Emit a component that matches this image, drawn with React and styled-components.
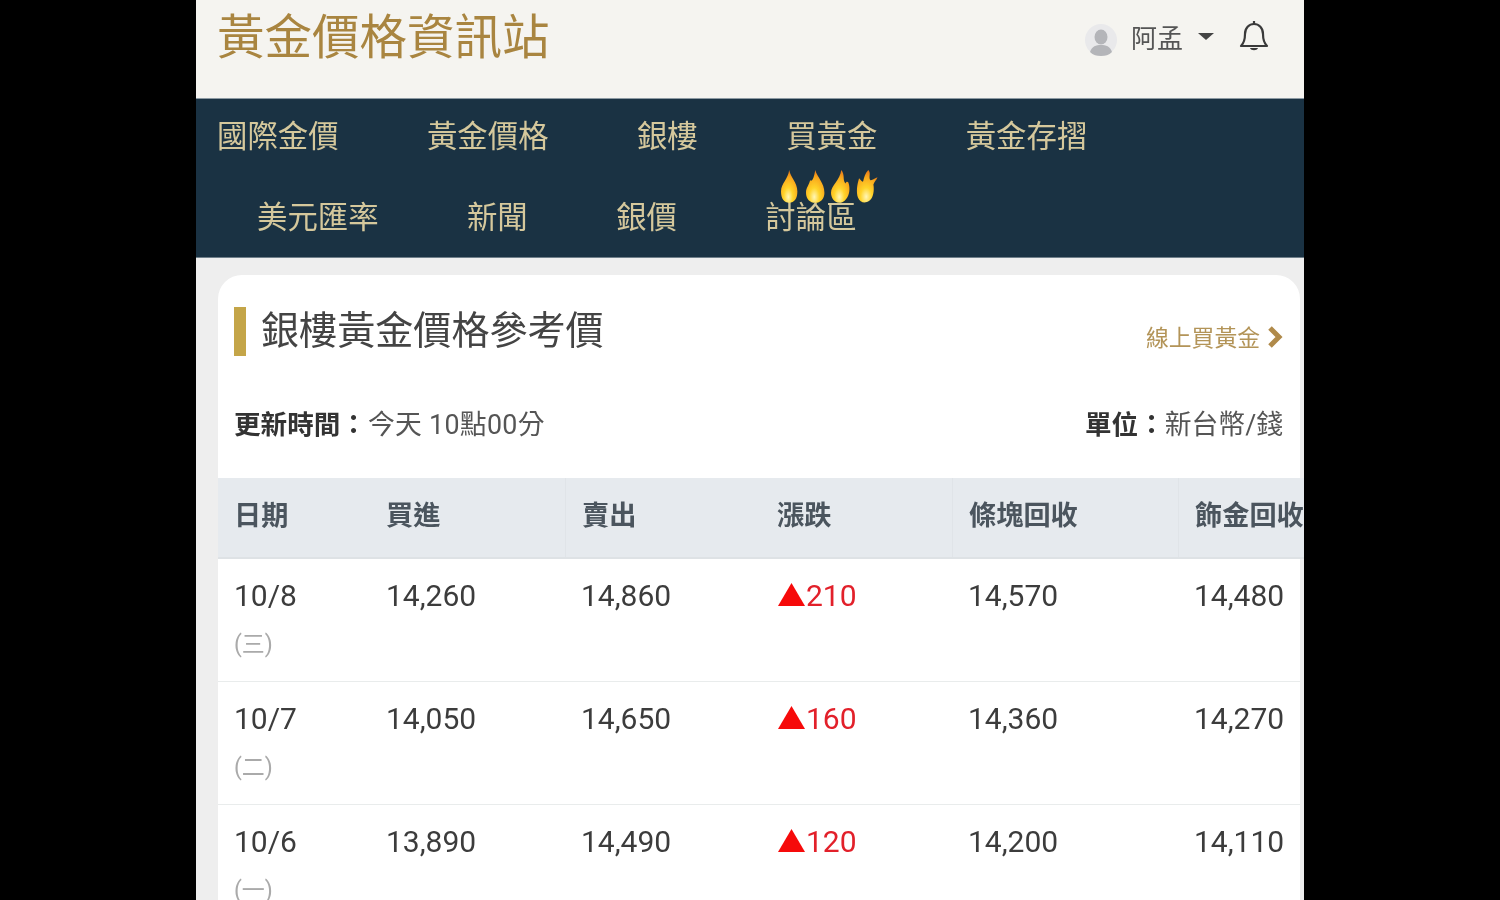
import React from "react";
import styled, { createGlobalStyle } from "styled-components";

const Global = createGlobalStyle`
  html, body { margin: 0; padding: 0; height: 100%; background: #000; overflow: hidden; }
  body { font-family: Roboto, "Noto Sans CJK TC", sans-serif; }
`;

const Phone = styled.div`
  width: 1108px;
  height: 900px;
  margin: 0 auto;
  background: #eeeeee;
  overflow: hidden;
  filter: blur(0.35px);
`;

const Header = styled.header`
  height: 99px;
  box-sizing: border-box;
  padding: 0 35px 22px 21px;
  background: #f5f4f0;
  border-bottom: 1px solid #8d9aa3;
  display: flex;
  align-items: center;
  justify-content: space-between;
`;

const Logo = styled.div`
  font-size: 47.5px;
  line-height: 60px;
  color: #a98540;
  white-space: nowrap;
`;

const User = styled.div`
  display: flex;
  align-items: center;
  color: #555;
  font-size: 26px;
  margin-top: -4px;
`;

const Avatar = styled.svg`
  width: 32px;
  height: 32px;
  margin-top: 8px;
  margin-right: 14px;
`;

const Caret = styled.span`
  width: 0;
  height: 0;
  margin: 0 25px 0 15px;
  border-left: 8px solid transparent;
  border-right: 8px solid transparent;
  border-top: 7px solid #444;
`;

const Bell = styled.svg`
  margin-top: -1px;
`;

const Nav = styled.nav`
  height: 159px;
  box-sizing: border-box;
  background: #1a3243;
  border-bottom: 1px solid #6f7f8a;
  padding: 0 21px;
  display: flex;
  flex-direction: column;
  gap: 11px;
`;

const NavRow = styled.div`
  height: 70px;
  display: flex;
  align-items: center;
  gap: 88.4px;
  padding-left: ${(p) => p.$indent || 0}px;
`;

const NavItem = styled.a`
  position: relative;
  font-size: 30.4px;
  color: #d5c89c;
  white-space: nowrap;
`;

const Flames = styled.span`
  position: absolute;
  left: 16px;
  top: -23px;
  display: flex;
  gap: 3.5px;
`;

const Card = styled.section`
  margin: 17px 4px 0 22px;
  background: #fff;
  border-radius: 24px 24px 0 0;
`;

const CardTop = styled.div`
  display: flex;
  justify-content: space-between;
  padding: 32px 17px 0 16px;
`;

const Heading = styled.h2`
  margin: 0;
  height: 49px;
  padding-left: 15px;
  border-left: 12px solid #c4a548;
  font-size: 38.1px;
  line-height: 49px;
  font-weight: 400;
  color: #444;
`;

const BuyLink = styled.a`
  display: flex;
  align-items: center;
  gap: 7px;
  margin-top: 5px;
  height: 49px;
  font-size: 22.8px;
  color: #b39458;
`;

const Meta = styled.div`
  display: flex;
  justify-content: space-between;
  padding: 45px 17px 34px 16px;
  font-size: 26.8px;
  line-height: 38px;
  color: #555;
  b { font-weight: 700; color: #333; font-size: 26.6px; }
`;

const Stamp = styled.span`
  margin-left: 1px;
  letter-spacing: 0.3px;
`;

const columns = "152px 195px 196px 191px 226px 122px";

const HeadRow = styled.div`
  display: grid;
  grid-template-columns: ${columns};
  height: 79px;
  margin-right: -4px;
  background: #e6eaee;
  border-bottom: 2px solid #dee2e5;
`;

const HeadCell = styled.div`
  display: flex;
  align-items: center;
  padding: 0 0 9px 16px;
  font-size: 27.2px;
  font-weight: 700;
  color: #4b555e;
  white-space: nowrap;
  border-left: ${(p) => (p.$line ? "1px solid #e0e4e8" : "none")};
`;

const Row = styled.div`
  display: grid;
  grid-template-columns: ${columns};
  height: 123px;
  box-sizing: border-box;
  border-bottom: 1px solid #e9ecec;
`;

const Cell = styled.div`
  padding: 17px 0 0 ${(p) => (p.$up ? 17 : 16)}px;
  font-size: 30px;
  line-height: 40px;
  color: ${(p) => (p.$up ? "#e2202a" : "#3c3c3c")};
  display: ${(p) => (p.$up ? "flex" : "block")};
  align-items: flex-start;
`;

const Week = styled.div`
  margin-top: 9px;
  font-size: 23px;
  line-height: 40px;
  color: #aaa;
`;

const Up = styled.span`
  width: 27px;
  height: 23px;
  margin: 7px 1px 0 0;
  background: #f60a0a;
  clip-path: polygon(50% 0, 100% 100%, 0 100%);
`;

const rows = [
  { date: "10/8", week: "(三)", buy: "14,260", sell: "14,860", diff: "210", bar: "14,570", gold: "14,480" },
  { date: "10/7", week: "(二)", buy: "14,050", sell: "14,650", diff: "160", bar: "14,360", gold: "14,270" },
  { date: "10/6", week: "(一)", buy: "13,890", sell: "14,490", diff: "120", bar: "14,200", gold: "14,110" },
];

const flamePaths = [
  "M8 0C9 7 16 12 16 21C16 28 13 32 8 32C3 32 0 28 0 21C0 13 7 9 8 0Z",
  "M9 0C11 7 18 13 18 22C18 28 14 32 9 32C4 32 0 28 0 22C0 17 3 15 4 10C6 12 8 7 9 0Z",
  "M10 0C14 5 11 9 14 13C15 11 16 11 17 12C19 18 18 24 15 28C13 31 10 32 8 32C3 31 0 27 0 22C0 15 9 10 10 0Z",
  "M12 0C15 3 12 7 14 10C16 10 18 8 21 7C20 10 18 11 17 14C18 20 17 27 13 30C9 33 4 32 2 27C0 22 1 14 3 8C5 10 6 12 7 11C8 7 9 3 12 0Z",
];

function Flame({ d, i }) {
  return (
    <svg width="21.5" height="34" viewBox="0 0 21 33">
      <defs>
        <radialGradient id={"fl" + i} cx="0.45" cy="0.82" r="0.8">
          <stop offset="0" stopColor="#fff6b8" />
          <stop offset="0.35" stopColor="#ffd42a" />
          <stop offset="0.75" stopColor="#f9a81c" />
          <stop offset="1" stopColor="#e97a18" />
        </radialGradient>
      </defs>
      <path d={d} fill={"url(#fl" + i + ")"} />
    </svg>
  );
}

export default function App() {
  return (
    <Phone>
      <Global />
      <Header>
        <Logo>黃金價格資訊站</Logo>
        <User>
          <Avatar viewBox="0 0 32 32">
            <circle cx="16" cy="16" r="16" fill="#e9e9eb" />
            <ellipse cx="16" cy="13" rx="6.5" ry="7.5" fill="#b4b5b9" />
            <path d="M5 28C7 22 11 21 16 21C21 21 25 22 27 28C24 31 20 32 16 32C12 32 8 31 5 28Z" fill="#b4b5b9" />
          </Avatar>
          阿孟
          <Caret />
          <Bell width="30" height="32" viewBox="0 0 30 32" fill="none" stroke="#3a3a3a" strokeWidth="2.2">
            <path d="M2 26H28C25 23 24 20 24 14C24 8 20 4 15 4C10 4 6 8 6 14C6 20 5 23 2 26Z" strokeLinejoin="round" />
            <path d="M15 1V4" />
            <path d="M11 28C12 31 18 31 19 28Z" fill="#3a3a3a" stroke="none" />
          </Bell>
        </User>
      </Header>
      <Nav>
        <NavRow>
          <NavItem>國際金價</NavItem>
          <NavItem>黃金價格</NavItem>
          <NavItem>銀樓</NavItem>
          <NavItem>買黃金</NavItem>
          <NavItem>黃金存摺</NavItem>
        </NavRow>
        <NavRow $indent={40}>
          <NavItem>美元匯率</NavItem>
          <NavItem>新聞</NavItem>
          <NavItem>銀價</NavItem>
          <NavItem>
            討論區
            <Flames>
              {flamePaths.map((d, i) => (
                <Flame key={i} d={d} i={i} />
              ))}
            </Flames>
          </NavItem>
        </NavRow>
      </Nav>
      <Card>
        <CardTop>
          <Heading>銀樓黃金價格參考價</Heading>
          <BuyLink>
            線上買黃金
            <svg width="16" height="22" viewBox="0 0 16 22" fill="none" stroke="#b08a4a" strokeWidth="5">
              <path d="M3 2L12 11L3 20" />
            </svg>
          </BuyLink>
        </CardTop>
        <Meta>
          <span><b>更新時間：</b><Stamp>今天 10點00分</Stamp></span>
          <span><b>單位：</b>新台幣/錢</span>
        </Meta>
        <HeadRow>
          <HeadCell>日期</HeadCell>
          <HeadCell>買進</HeadCell>
          <HeadCell $line>賣出</HeadCell>
          <HeadCell>漲跌</HeadCell>
          <HeadCell $line>條塊回收</HeadCell>
          <HeadCell $line>飾金回收</HeadCell>
        </HeadRow>
        {rows.map((r) => (
          <Row key={r.date}>
            <Cell>
              {r.date}
              <Week>{r.week}</Week>
            </Cell>
            <Cell>{r.buy}</Cell>
            <Cell>{r.sell}</Cell>
            <Cell $up>
              <Up />
              {r.diff}
            </Cell>
            <Cell>{r.bar}</Cell>
            <Cell>{r.gold}</Cell>
          </Row>
        ))}
      </Card>
    </Phone>
  );
}
